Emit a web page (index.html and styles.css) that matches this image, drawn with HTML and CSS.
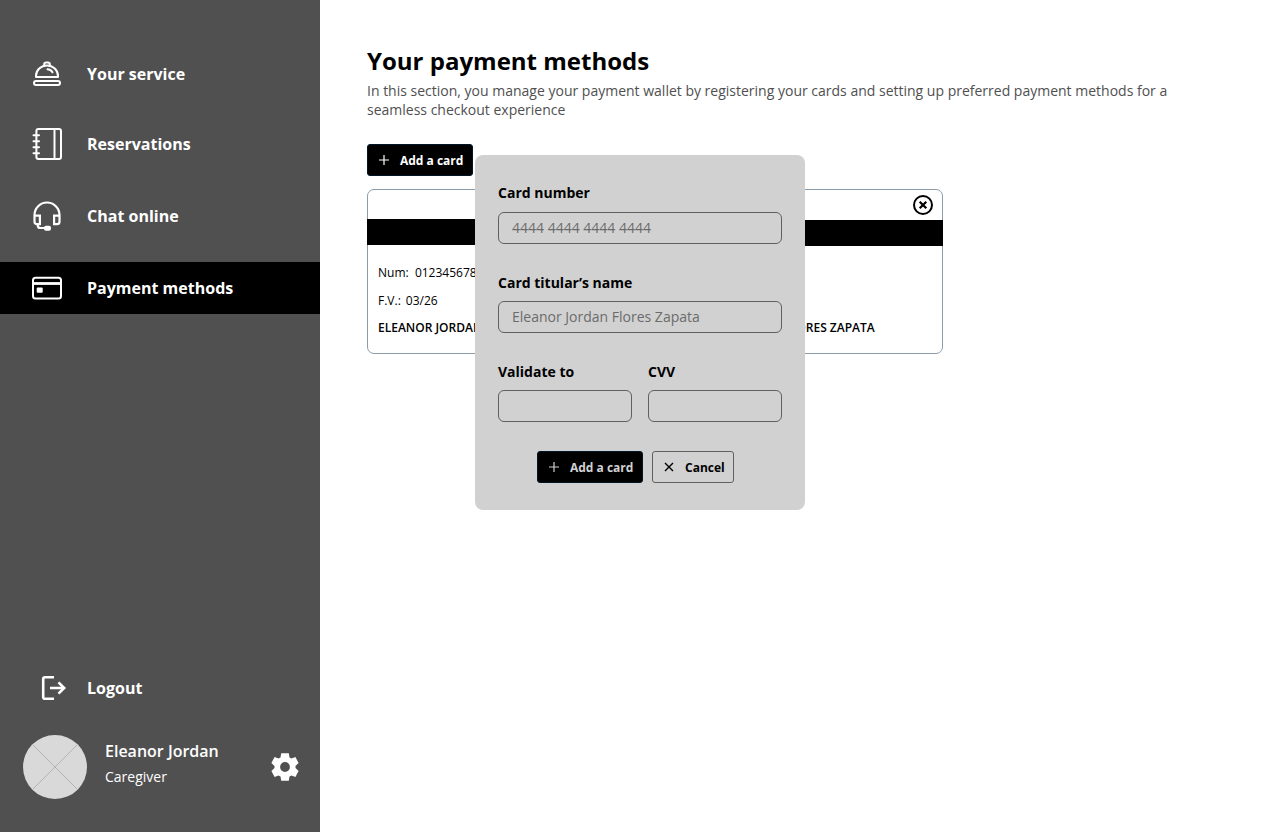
FILE: index.html
```html
<!DOCTYPE html>
<html lang="en">
<head>
<meta charset="utf-8">
<title>Your payment methods</title>
<link rel="stylesheet" href="styles.css">
</head>
<body>
<div class="app">
  <aside class="sidebar">
    <nav class="nav">
      <a class="nav-item">
        <svg class="nav-icon" viewBox="0 0 32 32" fill="none" stroke="#fff" stroke-width="2" stroke-linejoin="round" stroke-linecap="round"><rect x="3" y="23" width="26" height="4" rx="2"/><path d="M5 19v-1a11 10.500 0 0 1 22 0v1zM13.200 7.500V6a2 1.500 0 0 1 2-1.500h1.600a2 1.500 0 0 1 2 1.500v1.500M16.500 11.300c2.200.2 4 1.300 5 3"/></svg>
        <span>Your service</span>
      </a>
      <a class="nav-item">
        <svg class="nav-icon" viewBox="0 0 32 32" fill="none" stroke="#fff" stroke-width="2"><rect x="5.400" y="1" width="24.600" height="30" rx="2"/><path d="M23.500 1v30"/><path d="M2.500 7.200h5.500M2.500 13.200h5.500M2.500 19.200h5.500M2.500 25.200h5.500" stroke-linecap="round"/></svg>
        <span>Reservations</span>
      </a>
      <a class="nav-item">
        <svg class="nav-icon" viewBox="0 0 32 32" fill="none" stroke="#fff" stroke-width="2.600"><path d="M3.500 18v-3a12.500 12.500 0 0 1 25 0v3M3.500 15.600h5.400v8.500H6c-1.600 0-2.500-1-2.500-2.400zM28.500 15.600h-5.400v8.500H26c1.600 0 2.500-1 2.500-2.400zM6.700 24v1.200c0 1.800 1 2.800 2.800 2.800H14" stroke-width="2.200"/><rect x="13" y="25.700" width="7" height="5.100" rx="2" fill="#fff" stroke="none"/></svg>
        <span>Chat online</span>
      </a>
      <a class="nav-item active">
        <svg class="nav-icon" viewBox="0 0 32 32" fill="none" stroke="#fff" stroke-width="2"><rect x="2" y="5.800" width="28" height="20.600" rx="2.500"/><path d="M2 11.500h28" stroke-width="2.800"/><rect x="5.700" y="15.500" width="6" height="5.200" rx="1" fill="#fff" stroke="none"/></svg>
        <span>Payment methods</span>
      </a>
    </nav>
    <div class="account">
      <a class="logout">
        <svg class="logout-icon" viewBox="0 0 24 24" fill="none" stroke="#fff" stroke-width="2.600"><path d="M12 1.200H3A1.800 1.800 0 0 0 1.200 3v18A1.800 1.800 0 0 0 3 22.800h9M8 12h14M16.500 6.300l5.700 5.700-5.700 5.700"/></svg>
        <span>Logout</span>
      </a>
      <div class="profile">
        <svg class="avatar" viewBox="0 0 64 64"><circle cx="32" cy="32" r="32" fill="#d9d9d9"/><path d="M9.400 9.400l45.200 45.200M54.600 9.400L9.400 54.600" stroke="#aaa" stroke-width=".8"/></svg>
        <div class="who"><span class="name">Eleanor Jordan</span><span class="role">Caregiver</span></div>
        <svg class="gear" viewBox="0 0 28 28"><path fill="#fff" fill-rule="evenodd" d="M10.200.3h7.600l.7 4.100 2 1.200 3.900-1.500 3.200 5.900-3.100 2.900v2.200l3.100 2.900-3.200 5.900-3.900-1.500-2 1.200-.7 4.100h-7.600l-.7-4.100-2-1.200-3.900 1.500L.4 18l3.100-2.900v-2.200L.4 10l3.200-5.900 3.900 1.500 2-1.200zM14 9.100a4.900 4.900 0 1 0 0 9.800 4.900 4.900 0 0 0 0-9.800z"/></svg>
      </div>
    </div>
  </aside>
  <main class="content">
    <h1 class="title">Your payment methods</h1>
    <p class="intro">In this section, you manage your payment wallet by registering your cards and setting up preferred payment methods for a seamless checkout experience</p>
    <button class="btn primary"><svg class="btn-icon" viewBox="0 0 10 10" fill="none" stroke="currentColor" stroke-width="1.200"><path d="M5 0v10M0 5h10"/></svg><span>Add a card</span></button>
    <section class="cards">
      <article class="card">
        <div class="card-top"></div>
        <div class="stripe"></div>
        <div class="card-body"><p>Num:&nbsp; 0123456789</p><p class="expiry"><span>F.V.:</span><span>03/26</span></p><p class="holder">ELEANOR JORDAN FLORES ZAPATA</p></div>
      </article>
      <article class="card second">
        <div class="card-top"><svg class="remove" viewBox="0 0 20 20" fill="none" stroke="#000" stroke-width="2"><circle cx="10" cy="10" r="9"/><path d="M6.700 6.700l6.600 6.600M13.300 6.700l-6.600 6.600" stroke-width="2.200"/></svg></div>
        <div class="stripe"></div>
        <div class="card-body"><p>Num:</p><p>F.V.:</p><p class="holder">ELEANOR JORDAN FLORES ZAPATA</p></div>
      </article>
    </section>
  </main>
  <form class="modal">
    <div class="field first"><label for="number">Card number</label><input id="number" class="input" placeholder="4444 4444 4444 4444"></div>
    <div class="field"><label for="name">Card titular’s name</label><input id="name" class="input" placeholder="Eleanor Jordan Flores Zapata"></div>
    <div class="pair">
      <div class="field"><label for="valid">Validate to</label><input id="valid" class="input"></div>
      <div class="field"><label for="cvv">CVV</label><input id="cvv" class="input"></div>
    </div>
    <div class="actions">
      <button type="button" class="btn primary muted"><svg class="btn-icon" viewBox="0 0 10 10" fill="none" stroke="currentColor" stroke-width="1.200"><path d="M5 0v10M0 5h10"/></svg><span>Add a card</span></button>
      <button type="button" class="btn outline"><svg class="btn-icon" viewBox="0 0 10 10" fill="none" stroke="currentColor" stroke-width="1.400"><path d="M1 1l8 8M9 1L1 9"/></svg><span>Cancel</span></button>
    </div>
  </form>
</div>
</body>
</html>
```
FILE: styles.css
```css
* { box-sizing: border-box; }
body { margin: 0; font-family: "Open Sans", sans-serif; color: #000; background: #fff; }
h1, p { margin: 0; }
svg { display: block; flex: none; }
.app { position: relative; display: flex; width: 1280px; height: 832px; overflow: hidden; }

.sidebar { width: 320px; flex: none; background: #505050; color: #fff; display: flex; flex-direction: column; justify-content: space-between; padding: 48px 0 33px; }
.nav { display: flex; flex-direction: column; gap: 20px; }
.nav-item { display: flex; align-items: center; gap: 24px; height: 52px; padding-left: 31px; font-size: 16px; font-weight: 700; }
.nav-item:first-child { margin-bottom: -2px; }
.nav-item.active { background: #000; }
.nav-icon { width: 32px; height: 32px; }
.account { display: flex; flex-direction: column; gap: 35px; }
.logout { display: flex; align-items: center; gap: 21px; height: 24px; padding-left: 42px; font-size: 16px; font-weight: 700; }
.logout-icon { width: 24px; height: 24px; overflow: visible; }
.profile { display: flex; align-items: center; padding: 0 21px 0 23px; }
.avatar { width: 64px; height: 64px; }
.who { flex: 1; margin-left: 18px; display: flex; flex-direction: column; gap: 5px; margin-top: -8px; }
.name { font-size: 16px; line-height: 22px; font-weight: 600; }
.role { font-size: 14px; line-height: 19px; }
.gear { width: 28px; height: 28px; }

.content { flex: 1; padding: 44px 47px 0; }
.title { font-size: 24px; line-height: 33px; font-weight: 700; }
.intro { width: 830px; margin: 4px 0 25px; font-size: 14px; line-height: 19px; color: #505050; }

.btn { display: flex; align-items: center; gap: 11px; height: 32px; padding: 0 9px 0 11px; border-radius: 3px; font: 700 12px/16px "Open Sans", sans-serif; white-space: nowrap; }
.btn span { padding-top: 1px; }
.btn-icon { width: 10px; height: 10px; }
.primary { width: 106px; background: #000; border: 1px solid #001624; color: #fff; }
.muted { color: #d1d1d1; }
.outline { width: 82px; background: transparent; border: 1px solid #606060; color: #000; }

.cards { display: flex; gap: 16px; margin-top: 13px; }
.card { width: 280px; height: 165px; border: 1px solid #8a9caa; border-radius: 7px; }
.card-top { height: 29px; display: flex; justify-content: flex-end; padding: 5px 9px 0 0; }
.second .card-top { height: 30px; }
.remove { width: 20px; height: 20px; }
.stripe { height: 26px; background: #000; margin: 0 -1px; }
.card-body { padding: 20px 10px 0; display: flex; flex-direction: column; gap: 11px; font-size: 12px; line-height: 16.500px; white-space: nowrap; }
.second .card-body { padding: 19px 10px 0 12px; }
.expiry { display: flex; gap: 5px; }
.holder { font-weight: 600; }

.modal { position: absolute; left: 475px; top: 155px; width: 330px; height: 355px; padding: 28px 23px 0; background: #d1d1d1; border-radius: 8px; display: flex; flex-direction: column; gap: 29px; }
.field { display: flex; flex-direction: column; gap: 8px; flex: 1; }
.modal > .field { flex: none; }
.modal > .first { gap: 9px; }
.field label { font-size: 14px; line-height: 20px; font-weight: 700; }
.input { width: 100%; height: 32px; padding: 0 13px 2px; border: 1px solid #606060; border-radius: 6px; background: transparent; font: 14px "Open Sans", sans-serif; }
.input::placeholder { color: #6b6b6b; opacity: 1; }
.pair { display: flex; gap: 16px; }
.actions { display: flex; gap: 9px; padding-left: 39px; }
```
